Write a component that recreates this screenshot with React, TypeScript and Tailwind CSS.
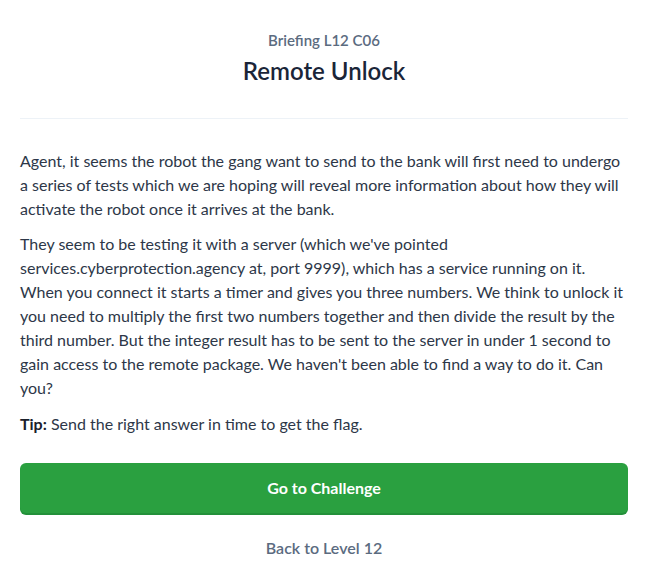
export default function App() {
  return (
    <div className="min-h-screen bg-white font-['Lato','Noto_Sans',sans-serif] text-[#2d3748]">
      <div className="pl-5 pr-[23px] pt-[30px]">
        <div className="text-center">
          <p className="text-[15px] font-semibold leading-5 text-[#5b6b80]">Briefing L12 C06</p>
          <h1 className="mt-[5px] text-[24px] font-semibold leading-8 text-[#1a2538]">Remote Unlock</h1>
        </div>

        <hr className="mt-[31px] border-t border-[#edf2f7]" />

        <div className="mt-[30px] text-[16px] leading-6">
          <p className="mb-[11px]">
            Agent, it seems the robot the gang want to send to the bank will first need to undergo a series of tests
            which we are hoping will reveal more information about how they will activate the robot once it arrives at
            the bank.
          </p>
          <p className="mb-[12px]">
            They seem to be testing it with a server (which we've pointed services.cyberprotection.agency at, port
            9999), which has a service running on it. When you connect it starts a timer and gives you three numbers.
            We think to unlock it you need to multiply the first two numbers together and then divide the result by the
            third number. But the integer result has to be sent to the server in under 1 second to gain access to the
            remote package. We haven't been able to find a way to do it. Can you?
          </p>
          <p>
            <span className="font-bold text-[#1a202c]">Tip:</span> Send the right answer in time to get the flag.
          </p>
        </div>

        <button className="mt-[27px] flex h-[50px] w-full items-center justify-center rounded-md bg-[#2aa040] text-[16px] font-bold text-white shadow-[0_2px_0_#23903a]">
          Go to Challenge
        </button>

        <div className="mt-[23px] text-center">
          <a className="text-[16px] font-semibold text-[#5b6b80]">Back to Level 12</a>
        </div>
      </div>
    </div>
  );
}
